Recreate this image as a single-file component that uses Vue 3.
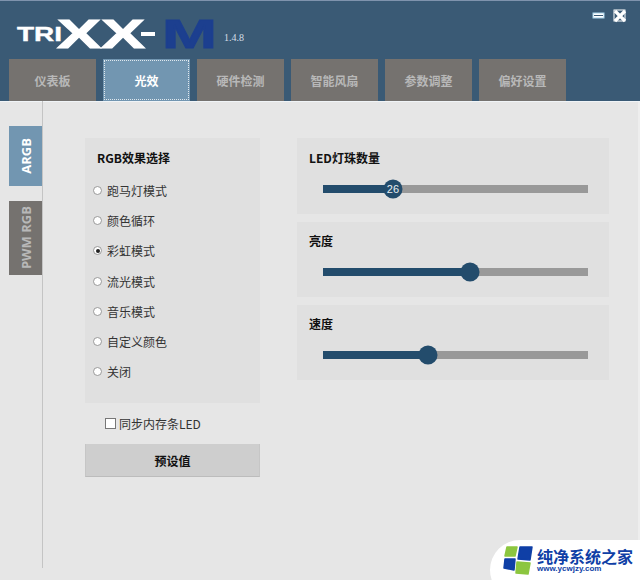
<script setup>
import { ref } from 'vue'

const tabs = ['仪表板', '光效', '硬件检测', '智能风扇', '参数调整', '偏好设置']
const effects = ['跑马灯模式', '颜色循环', '彩虹模式', '流光模式', '音乐模式', '自定义颜色', '关闭']
const sliders = [
  { title: 'LED灯珠数量', pct: 26.4, value: '26' },
  { title: '亮度', pct: 55.5 },
  { title: '速度', pct: 39.8 },
]
const activeTab = ref(1)
const effect = ref(2)
</script>

<template>
  <div class="window">
    <header class="head">
      <div class="title-row">
        <svg class="logo" width="240" height="36" viewBox="0 0 240 36">
          <text class="logo-tri" x="17" y="24" textLength="45" lengthAdjust="spacingAndGlyphs">TRI</text>
          <text class="logo-x" x="57" y="31" textLength="88" lengthAdjust="spacingAndGlyphs">XX</text>
          <rect x="141" y="15" width="14" height="4" fill="#fff" />
          <text class="logo-m" x="162" y="31" textLength="55" lengthAdjust="spacingAndGlyphs">M</text>
        </svg>
        <span class="version">1.4.8</span>
        <div class="win-btns">
          <svg width="14" height="8" viewBox="0 0 14 8"><rect x="1" y="1" width="11" height="5" fill="#fff" stroke="#a9d3ea" /><rect x="2" y="3" width="9" height="1" fill="#3a5a75" /></svg>
          <svg width="14" height="14" viewBox="0 0 14 14"><path d="M2 2 L12 12 M12 2 L2 12" stroke="#fff" stroke-width="3.2" fill="none" /><rect x="1" y="1" width="11" height="11" fill="none" stroke="#fff" stroke-width="1" /></svg>
        </div>
      </div>
      <nav class="tabs">
        <div v-for="(t, i) in tabs" :key="t" class="tab" :class="{ on: i === activeTab }">{{ t }}</div>
      </nav>
    </header>

    <main class="body">
      <aside class="side">
        <div class="side-tab on"><span>ARGB</span></div>
        <div class="side-tab pwm"><span>PWM RGB</span></div>
      </aside>

      <section class="content">
        <div class="left">
          <div class="panel effects">
            <h3>RGB效果选择</h3>
            <ul>
              <li v-for="(e, i) in effects" :key="e">
                <i class="radio" :class="{ checked: i === effect }"></i>{{ e }}
              </li>
            </ul>
          </div>
          <label class="sync"><i class="check"></i>同步内存条LED</label>
          <div class="preset">预设值</div>
        </div>

        <div class="right">
          <div v-for="s in sliders" :key="s.title" class="panel slider-card">
            <h3>{{ s.title }}</h3>
            <div class="track">
              <div class="fill" :style="{ width: s.pct + '%' }"></div>
              <div class="knob" :style="{ left: s.pct + '%' }">{{ s.value }}</div>
            </div>
          </div>
        </div>
      </section>
    </main>

    <div class="watermark">
      <svg width="30" height="30" viewBox="0 0 30 30">
        <path d="M4 1 L14 1 L12 10 L2 10 Z" fill="#8cc63f" stroke="#8cc63f" stroke-width="1.5" stroke-linejoin="round" />
        <path d="M17 1 L29 1 L27 14 L15 13 Z" fill="#0f3fa6" stroke="#0f3fa6" stroke-width="1.5" stroke-linejoin="round" />
        <path d="M2 13 L12 13 L11 24 L1 22 Z" fill="#0f3fa6" stroke="#0f3fa6" stroke-width="1.5" stroke-linejoin="round" />
        <path d="M14 16 L27 17 L25 28 L13 27 Z" fill="#8cc63f" stroke="#8cc63f" stroke-width="1.5" stroke-linejoin="round" />
      </svg>
      <div class="wm-text">
        <strong>纯净系统之家</strong>
        <small>www.ycwjzy.com</small>
      </div>
    </div>
  </div>
</template>

<style>
html, body {
  margin: 0;
  background: #e6e6e6;
}
</style>

<style scoped>
.window {
  position: relative;
  width: 640px;
  height: 580px;
  overflow: hidden;
  background: #e6e6e6;
  font-family: "Noto Sans CJK SC", "Noto Sans", sans-serif;
  color: #222;
}

.head {
  height: 101px;
  box-sizing: border-box;
  border-top: 1px solid #7f93ad;
  background: #3a5a75;
  display: flex;
  flex-direction: column;
}
.title-row {
  height: 58px;
  display: flex;
  position: relative;
}
.logo {
  margin-top: 16px;
  flex: none;
  overflow: visible;
}
.logo text {
  font-family: "Liberation Sans", sans-serif;
  font-weight: 700;
}
.logo-tri {
  font-size: 20px;
  fill: #fff;
  stroke: #fff;
  stroke-width: 0.4;
}
.logo-x {
  font-size: 40px;
  fill: #fff;
  stroke: #fff;
  stroke-width: 1;
}
.logo-m {
  font-size: 40px;
  fill: #1c3f8f;
  stroke: #1c3f8f;
  stroke-width: 1;
}
.version {
  position: absolute;
  left: 224px;
  top: 31px;
  font-family: "Liberation Serif", serif;
  font-size: 10px;
  color: #d5dde6;
}
.win-btns {
  position: absolute;
  right: 13px;
  top: 8px;
  display: flex;
  align-items: center;
  gap: 7px;
}
.win-btns svg {
  display: block;
}

.tabs {
  display: flex;
  gap: 7px;
  padding-left: 9px;
  flex: 1;
}
.tab {
  width: 87px;
  background: #75726f;
  color: #b8b8b8;
  font-size: 12px;
  font-weight: 700;
  display: flex;
  align-items: center;
  justify-content: center;
}
.tab.on {
  background: #7296b1;
  color: #fff;
  outline: 1px dotted #dfe8ee;
  outline-offset: -2px;
}

.body {
  display: flex;
  height: 467px;
  box-shadow: inset 0 1px 0 #f0f4f7, inset -2px 0 0 #eeeeee;
}
.side {
  width: 43px;
  box-sizing: border-box;
  border-right: 1px solid #c4c4c4;
  padding: 25px 0 0 9px;
  display: flex;
  flex-direction: column;
  gap: 15px;
  flex: none;
}
.side-tab {
  width: 33px;
  height: 60px;
  background: #7296b1;
  color: #fff;
  font-size: 13px;
  font-weight: 700;
  display: flex;
  align-items: center;
  justify-content: center;
}
.side-tab span {
  writing-mode: vertical-rl;
  transform: rotate(180deg);
  font-family: "Open Sans", sans-serif;
  white-space: nowrap;
}
.side-tab.pwm {
  height: 74px;
  background: #75726f;
  color: #b8b8b8;
}

.content {
  display: flex;
  align-items: flex-start;
  padding: 37px 0 0 42px;
  gap: 37px;
}
.left {
  width: 175px;
  flex: none;
}
.panel {
  background: #e0e0e0;
}
.panel h3 {
  margin: 0;
  font-size: 12px;
  font-weight: 700;
  color: #111;
}
.effects {
  height: 265px;
  box-sizing: border-box;
  padding: 11px 0 0 12px;
}
.effects ul {
  list-style: none;
  margin: 9.4px 0 0 -4px;
  padding: 0;
}
.effects li {
  height: 30.2px;
  display: flex;
  align-items: center;
  font-size: 12px;
  color: #333;
}
.radio {
  width: 7px;
  height: 7px;
  box-sizing: content-box;
  border: 1px solid #999;
  border-radius: 50%;
  background: #fff;
  margin-right: 5px;
  position: relative;
}
.radio.checked::after {
  content: "";
  position: absolute;
  left: 1.5px;
  top: 1.5px;
  width: 4px;
  height: 4px;
  border-radius: 50%;
  background: #222;
}
.sync {
  display: flex;
  align-items: center;
  font-size: 12px;
  color: #333;
  padding-left: 20px;
  margin-top: 12px;
  height: 16px;
}
.check {
  width: 9px;
  height: 9px;
  border: 1px solid #777;
  background: #fff;
  margin-right: 3px;
}
.preset {
  margin-top: 13px;
  height: 33px;
  box-sizing: border-box;
  background: #cecece;
  border-bottom: 1px solid #bcbcbc;
  border-left: 1px solid #c6c6c6;
  border-right: 1px solid #c6c6c6;
  display: flex;
  align-items: center;
  justify-content: center;
  font-size: 12px;
  font-weight: 700;
  color: #111;
}

.right {
  width: 312px;
  display: flex;
  flex-direction: column;
  gap: 8px;
  flex: none;
}
.slider-card {
  height: 75px;
  box-sizing: border-box;
  padding: 10px 12px 0 12px;
}
.slider-card:first-child {
  height: 76px;
  padding-top: 11px;
}
.track {
  position: relative;
  height: 8px;
  margin: 19px 9px 0 14px;
  background: #999;
}
.fill {
  height: 100%;
  background: #234c6c;
}
.knob {
  position: absolute;
  top: 50%;
  width: 19px;
  height: 19px;
  border-radius: 50%;
  background: #234c6c;
  transform: translate(-50%, -50%);
  color: #e8eef2;
  font-family: "Liberation Sans", sans-serif;
  font-size: 11px;
  line-height: 19px;
  text-align: center;
}

.watermark {
  position: absolute;
  left: 490px;
  top: 540px;
  width: 170px;
  height: 60px;
  border-radius: 30px 0 0 30px;
  background: #fff;
  display: flex;
  padding-left: 13px;
  box-sizing: border-box;
  gap: 4px;
}
.watermark svg {
  margin-top: 6px;
  flex: none;
}
.wm-text {
  display: flex;
  flex-direction: column;
  color: #0f3fa6;
  padding-top: 8px;
}
.wm-text strong {
  font-size: 16px;
  line-height: 17px;
  white-space: nowrap;
}
.wm-text small {
  font-family: "Liberation Sans", sans-serif;
  font-size: 8px;
  font-weight: 700;
  line-height: 8px;
}
</style>
